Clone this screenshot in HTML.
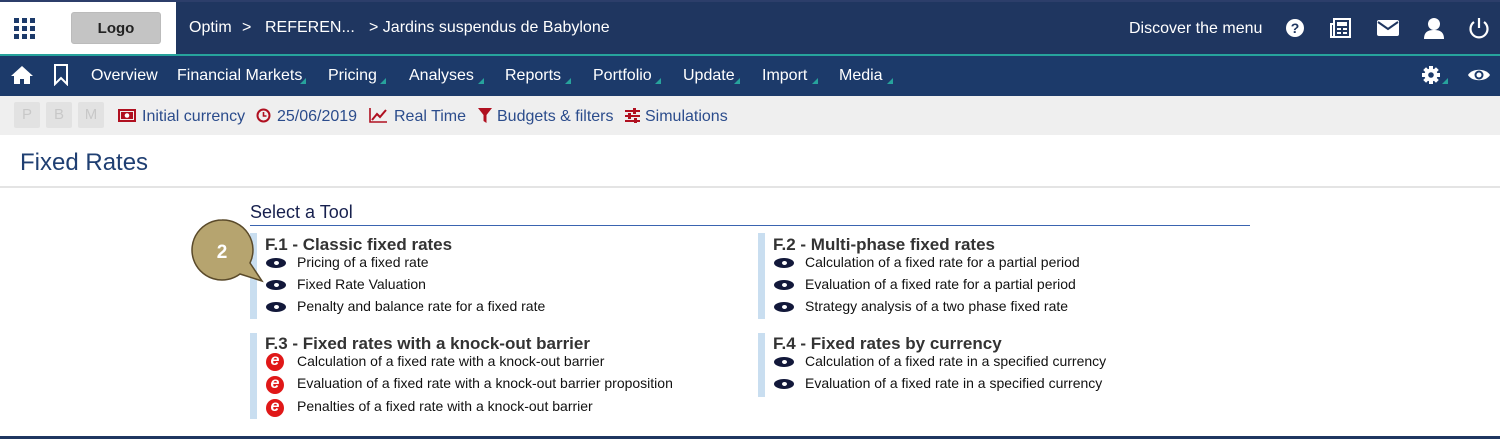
<!DOCTYPE html>
<html><head><meta charset="utf-8"><style>
*{margin:0;padding:0;box-sizing:border-box}
body{width:1500px;height:439px;overflow:hidden;background:#fff;font-family:"Liberation Sans",Arial,sans-serif;position:relative}
.a{position:absolute;white-space:nowrap}
.top{left:0;top:0;width:1500px;height:54px;background:#1f3660;border-top:2px solid #2c3e6a}
.teal{left:0;top:54px;width:1500px;height:2px;background:#27a39c}
.nav{left:0;top:56px;width:1500px;height:40px;background:#1c3a6a}
.tb{left:0;top:96px;width:1500px;height:39px;background:#efefef}
.w{color:#fff;font-size:16px}
.n{color:#fff;font-size:16px;top:67px}
.tri{position:absolute;width:0;height:0;border-left:6px solid transparent;border-bottom:6px solid #27a39c}
.t{color:#2b4c8c;font-size:16px;top:108px}
.pb{top:102px;width:26px;height:26px;background:#e2e2e2;color:#c8c8c8;font-size:15px;text-align:center;line-height:26px;border-radius:2px}
.h{font-weight:bold;font-size:17px;color:#333}
.i{font-size:14px;color:#111}
.bar{width:7px;background:#c9def0}
.eye{position:absolute;width:20px;height:10px;background:#12183a;border-radius:50%}
.eye:after{content:"";position:absolute;left:8px;top:3px;width:5px;height:4px;background:#fff;border-radius:50%}
.e{position:absolute;width:18px;height:18px;border-radius:50%;background:#e01818;color:#fff;font-size:16px;font-style:italic;font-weight:bold;text-align:center;line-height:16px}
</style></head><body>
<div class="a top"></div>
<div class="a" style="left:0;top:2px;width:176px;height:52px;background:#fff"></div>
<div class="a teal"></div>
<div class="a nav"></div>
<div class="a tb"></div>
<svg class="a" style="left:14px;top:18px" width="22" height="22"><g fill="#1c3a6a"><rect x="0" y="0" width="5" height="5"/><rect x="8" y="0" width="5" height="5"/><rect x="16" y="0" width="5" height="5"/><rect x="0" y="8" width="5" height="5"/><rect x="8" y="8" width="5" height="5"/><rect x="16" y="8" width="5" height="5"/><rect x="0" y="16" width="5" height="5"/><rect x="8" y="16" width="5" height="5"/><rect x="16" y="16" width="5" height="5"/></g></svg>
<div class="a" style="left:71px;top:12px;width:90px;height:32px;background:#c4c4c4;border-radius:3px;border:1px solid #bbb;text-align:center;line-height:32px;font-weight:bold;font-size:15px;color:#222">Logo</div>
<div class="a w" style="left:189px;top:19px">Optim</div>
<div class="a w" style="left:242px;top:19px">&gt;</div>
<div class="a w" style="left:265px;top:19px">REFEREN...</div>
<div class="a w" style="left:369px;top:19px">&gt; Jardins suspendus de Babylone</div>
<div class="a w" style="left:1129px;top:20px;font-size:16px">Discover the menu</div>
<svg class="a" style="left:1285px;top:18px" width="20" height="20"><circle cx="10" cy="10" r="9" fill="#fff"/><text x="10" y="15" text-anchor="middle" font-size="14" font-weight="bold" fill="#1f3660" font-family="Liberation Sans">?</text></svg>
<svg class="a" style="left:1330px;top:17px" width="22" height="22"><rect x="4" y="2" width="16" height="18" fill="none" stroke="#fff" stroke-width="2"/><path d="M4 7H1v13h4" fill="none" stroke="#fff" stroke-width="2"/><rect x="7" y="5" width="10" height="4" fill="#fff"/><rect x="7" y="11" width="4" height="2" fill="#fff"/><rect x="13" y="11" width="4" height="2" fill="#fff"/><rect x="7" y="15" width="4" height="2" fill="#fff"/><rect x="13" y="15" width="4" height="2" fill="#fff"/></svg>
<svg class="a" style="left:1377px;top:20px" width="22" height="16"><rect x="0" y="0" width="22" height="16" rx="2" fill="#fff"/><path d="M1 2l10 7 10-7" fill="none" stroke="#1f3660" stroke-width="2"/></svg>
<svg class="a" style="left:1423px;top:17px" width="22" height="22"><circle cx="11" cy="7" r="6" fill="#fff"/><path d="M1 22c0-7 4-9 10-9s10 2 10 9z" fill="#fff"/></svg>
<svg class="a" style="left:1468px;top:17px" width="22" height="22"><path d="M6 5a8.5 8.5 0 1 0 10 0" fill="none" stroke="#fff" stroke-width="2.2"/><path d="M11 1v10" stroke="#fff" stroke-width="2.2"/></svg>
<svg class="a" style="left:11px;top:65px" width="22" height="20"><path d="M11 1L0 11h3v8h6v-5h4v5h6v-8h3z" fill="#fff"/></svg>
<svg class="a" style="left:53px;top:64px" width="16" height="22"><path d="M2 1h12v19l-6-6-6 6z" fill="none" stroke="#fff" stroke-width="2"/></svg>
<div class="a n" style="left:91px">Overview</div>
<div class="a n" style="left:177px">Financial Markets</div><div class="tri" style="left:300px;top:78px"></div>
<div class="a n" style="left:328px">Pricing</div><div class="tri" style="left:380px;top:78px"></div>
<div class="a n" style="left:409px">Analyses</div><div class="tri" style="left:478px;top:78px"></div>
<div class="a n" style="left:505px">Reports</div><div class="tri" style="left:565px;top:78px"></div>
<div class="a n" style="left:593px">Portfolio</div><div class="tri" style="left:655px;top:78px"></div>
<div class="a n" style="left:683px">Update</div><div class="tri" style="left:734px;top:78px"></div>
<div class="a n" style="left:762px">Import</div><div class="tri" style="left:812px;top:78px"></div>
<div class="a n" style="left:839px">Media</div><div class="tri" style="left:887px;top:78px"></div>
<svg class="a" style="left:1421px;top:65px" width="20" height="20"><g fill="#fff"><circle cx="10" cy="10" r="6.5"/><rect x="8" y="1" width="4" height="18"/><rect x="1" y="8" width="18" height="4"/><rect x="8" y="1" width="4" height="18" transform="rotate(45 10 10)"/><rect x="8" y="1" width="4" height="18" transform="rotate(-45 10 10)"/></g><circle cx="10" cy="10" r="2.8" fill="#1c3a6a"/></svg>
<div class="tri" style="left:1442px;top:78px"></div>
<svg class="a" style="left:1467px;top:67px" width="24" height="16"><path d="M1 8C5 1 19 1 23 8 19 15 5 15 1 8z" fill="#fff"/><circle cx="12" cy="8" r="4.5" fill="#1c3a6a"/><circle cx="12" cy="8" r="2.5" fill="#fff"/></svg>
<div class="a pb" style="left:14px">P</div>
<div class="a pb" style="left:46px">B</div>
<div class="a pb" style="left:78px">M</div>
<svg class="a" style="left:118px;top:109px" width="18" height="13"><rect x="1" y="1" width="16" height="11" fill="none" stroke="#b01020" stroke-width="2"/><rect x="3" y="3" width="12" height="7" fill="#b01020"/><circle cx="9" cy="6.5" r="2.3" fill="#fff"/></svg>
<div class="a t" style="left:142px">Initial currency</div>
<svg class="a" style="left:256px;top:108px" width="15" height="15"><circle cx="7.5" cy="7.5" r="6" fill="none" stroke="#b01020" stroke-width="2"/><path d="M7.5 4v4h3" fill="none" stroke="#b01020" stroke-width="1.6"/></svg>
<div class="a t" style="left:277px">25/06/2019</div>
<svg class="a" style="left:369px;top:107px" width="19" height="16"><path d="M1 1v14h17" fill="none" stroke="#b01020" stroke-width="1.6"/><path d="M3 13l5-6 3 3 6-7" fill="none" stroke="#b01020" stroke-width="2"/></svg>
<div class="a t" style="left:394px">Real Time</div>
<svg class="a" style="left:478px;top:108px" width="14" height="15"><path d="M0 0h14L8.5 7v8l-3-2V7z" fill="#b01020"/></svg>
<div class="a t" style="left:497px">Budgets &amp; filters</div>
<svg class="a" style="left:625px;top:108px" width="15" height="15"><g stroke="#b01020" stroke-width="2"><path d="M0 3h15M0 8h15M0 13h15"/></g><g fill="#b01020"><rect x="8" y="0" width="3" height="6"/><rect x="3" y="5" width="3" height="6"/><rect x="9" y="10" width="3" height="5"/></g></svg>
<div class="a t" style="left:645px">Simulations</div>
<div class="a" style="left:20px;top:149px;font-size:24px;color:#1f3f72">Fixed Rates</div>
<div class="a" style="left:0;top:186px;width:1500px;height:2px;background:#e4e4e4"></div>
<div class="a" style="left:250px;top:202px;font-size:18px;color:#17204e">Select a Tool</div>
<div class="a" style="left:250px;top:225px;width:1000px;height:1px;background:#3a64b0"></div>
<div class="a bar" style="left:250px;top:233px;height:86px"></div>
<div class="a bar" style="left:250px;top:333px;height:86px"></div>
<div class="a bar" style="left:758px;top:233px;height:86px"></div>
<div class="a bar" style="left:758px;top:333px;height:64px"></div>
<div class="a h" style="left:265px;top:235px">F.1 - Classic fixed rates</div>
<div class="eye" style="left:266px;top:258px"></div><div class="a i" style="left:297px;top:254px">Pricing of a fixed rate</div>
<div class="eye" style="left:266px;top:280px"></div><div class="a i" style="left:297px;top:276px">Fixed Rate Valuation</div>
<div class="eye" style="left:266px;top:302px"></div><div class="a i" style="left:297px;top:298px">Penalty and balance rate for a fixed rate</div>
<div class="a h" style="left:265px;top:334px">F.3 - Fixed rates with a knock-out barrier</div>
<div class="e" style="left:266px;top:353px">e</div><div class="a i" style="left:297px;top:353px">Calculation of a fixed rate with a knock-out barrier</div>
<div class="e" style="left:266px;top:376px">e</div><div class="a i" style="left:297px;top:375px">Evaluation of a fixed rate with a knock-out barrier proposition</div>
<div class="e" style="left:266px;top:399px">e</div><div class="a i" style="left:297px;top:398px">Penalties of a fixed rate with a knock-out barrier</div>
<div class="a h" style="left:773px;top:235px">F.2 - Multi-phase fixed rates</div>
<div class="eye" style="left:774px;top:258px"></div><div class="a i" style="left:805px;top:254px">Calculation of a fixed rate for a partial period</div>
<div class="eye" style="left:774px;top:280px"></div><div class="a i" style="left:805px;top:276px">Evaluation of a fixed rate for a partial period</div>
<div class="eye" style="left:774px;top:302px"></div><div class="a i" style="left:805px;top:298px">Strategy analysis of a two phase fixed rate</div>
<div class="a h" style="left:773px;top:334px">F.4 - Fixed rates by currency</div>
<div class="eye" style="left:774px;top:357px"></div><div class="a i" style="left:805px;top:353px">Calculation of a fixed rate in a specified currency</div>
<div class="eye" style="left:774px;top:379px"></div><div class="a i" style="left:805px;top:375px">Evaluation of a fixed rate in a specified currency</div>
<svg class="a" style="left:188px;top:218px" width="80" height="66"><path d="M34 2a30 30 0 1 0 18 54l22 7-12-18A30 30 0 0 0 34 2z" fill="#b6a46f" stroke="#5a4a2a" stroke-width="1.5"/><text x="34" y="40" text-anchor="middle" font-size="19" font-weight="bold" fill="#fff" font-family="Liberation Sans">2</text></svg>
<div class="a" style="left:0;top:436px;width:1500px;height:3px;background:#1f3660"></div>
</body></html>
